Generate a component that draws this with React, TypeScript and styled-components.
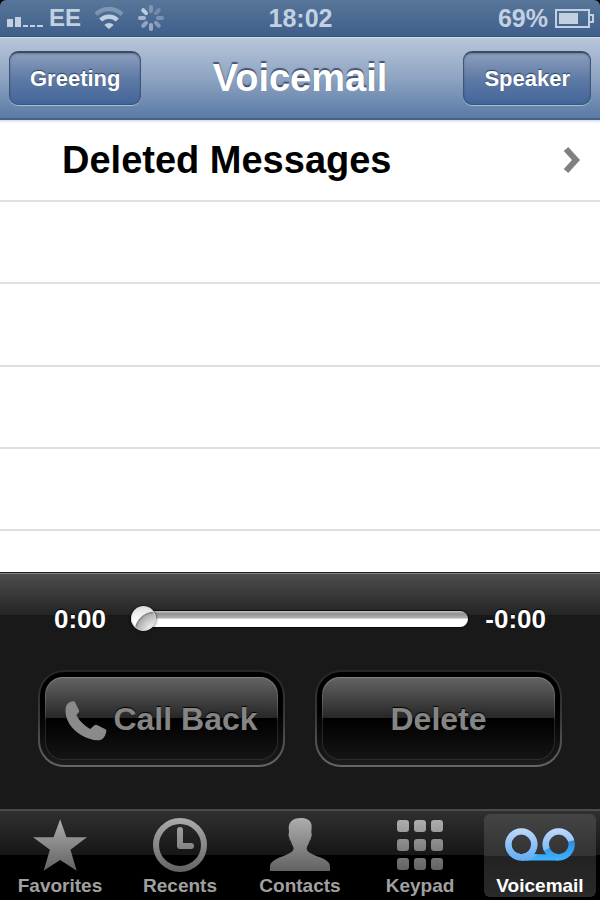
import React from "react";
import styled, { createGlobalStyle, css } from "styled-components";

const GlobalStyle = createGlobalStyle`
  *, *::before, *::after { box-sizing: border-box; }
  body {
    margin: 0;
    background: #000;
    font-family: "Liberation Sans", Arial, sans-serif;
    font-weight: bold;
  }
  button, input { font: inherit; }
`;

const Screen = styled.div`
  display: flex;
  flex-direction: column;
  min-height: 100vh;
`;

const StatusBar = styled.header`
  display: grid;
  grid-template-columns: 1fr auto 1fr;
  align-items: center;
  height: 37px;
  padding: 0 6px 0 7px;
  border-bottom: 1px solid #34527a;
  border-radius: 6px 6px 0 0;
  background: linear-gradient(#587699, #3f5f8b);
  color: #c3d0e2;
  font-size: 25px;
  line-height: 36px;
`;

const StatusGroup = styled.div<{ $end?: boolean }>`
  display: flex;
  align-items: center;
  justify-content: ${(p) => (p.$end ? "flex-end" : "flex-start")};
  gap: ${(p) => (p.$end ? "7px" : "13px")};
`;

const Carrier = styled.span`
  display: flex;
  align-items: center;
  gap: 6px;
  font-size: 24px;
`;

const NavBar = styled.nav`
  display: grid;
  grid-template-columns: 1fr auto 1fr;
  align-items: center;
  height: 83px;
  padding: 0 9px;
  border-top: 1px solid #d3dcea;
  border-bottom: 2px solid #45628a;
  background: linear-gradient(#b9c6da, #8ea4c2 50%, #5a7aa5);
`;

const Title = styled.h1`
  margin: 0;
  color: #fff;
  font-size: 38px;
  line-height: 44px;
  text-shadow: 0 -2px 1px rgba(40, 55, 80, 0.75);
`;

const NavButton = styled.button<{ $end?: boolean }>`
  justify-self: ${(p) => (p.$end ? "end" : "start")};
  height: 54px;
  padding: 0 20px;
  border: 1px solid #3d5578;
  border-top: 2px solid #3c4c66;
  border-radius: 9px;
  background: linear-gradient(#8d9fbd, #5f7ba6 50%, #42659a);
  box-shadow: 0 1px 0 rgba(190, 208, 232, 0.75), inset 0 1px 2px rgba(30, 50, 80, 0.35);
  color: #fff;
  font-size: 22px;
  line-height: 26px;
  text-shadow: 0 -1px 1px rgba(30, 45, 75, 0.8);
`;

const List = styled.main`
  flex: 1;
  display: grid;
  grid-template-rows: repeat(5, 2fr) 1fr;
  background: linear-gradient(#d5dbe8, #fff 3px);
`;

const rowStyle = css`
  border: 0;
  border-bottom: 2px solid #e0e0e0;
`;

const EmptyRow = styled.div`
  ${rowStyle}
  &:last-child { border-bottom: 0; }
`;

const MessageRow = styled.button`
  ${rowStyle}
  display: flex;
  align-items: center;
  justify-content: space-between;
  padding: 0 19px 0 62px;
  background: none;
  color: #000;
  font-size: 38px;
  line-height: 44px;
`;

const Player = styled.section`
  padding: 29px 0 42px;
  border-top: 1px solid #222;
  background:
    linear-gradient(#828282, #828282) top / 100% 1px no-repeat,
    linear-gradient(#4e4e4e, #242424) top / 100% 42px no-repeat,
    #191919;
`;

const Scrubber = styled.div`
  display: flex;
  align-items: center;
  gap: 17px;
  padding: 0 54px;
  color: #fff;
  font-size: 26px;
  line-height: 34px;
  text-shadow: 0 -1px 1px #000;
`;

const Slider = styled.input`
  flex: 1;
  min-width: 0;
  height: 26px;
  margin: 0 0 0 8px;
  appearance: none;
  background: none;

  &::-webkit-slider-runnable-track {
    height: 16px;
    border-radius: 8px;
    background: linear-gradient(#c4c4c4 0, #8f8f8f 18%, #b4b4b4 45%, #fff 50%);
    box-shadow: 0 0 1px 1px #0c0c0c;
  }
  &::-webkit-slider-thumb {
    appearance: none;
    width: 25px;
    height: 25px;
    margin-top: -5px;
    border-radius: 50%;
    background:
      radial-gradient(circle at 24px 26px, #fff 0, #e4e4e4 8px, #b0b0b0 18px, #858585 20px, transparent 21px),
      linear-gradient(#dedede, #fff 60%);
    box-shadow: inset 0 0 1px 1px #d4d4d4, 0 0 3px rgba(0, 0, 0, 0.8);
  }
`;

const Actions = styled.div`
  display: grid;
  grid-template-columns: 1fr 1fr;
  gap: 30px;
  margin-top: 34px;
  padding: 0 38px;
`;

const ActionButton = styled.button`
  padding: 5px;
  border: 2px solid transparent;
  border-radius: 26px;
  background:
    linear-gradient(#000 40%, #1c1c1c) padding-box,
    linear-gradient(#262626, #3a3a3a 50%, #666) border-box;
`;

const ActionFace = styled.span`
  display: flex;
  align-items: center;
  justify-content: center;
  gap: 6px;
  height: 83px;
  border: 1px solid transparent;
  border-radius: 18px;
  background:
    linear-gradient(#636363, #262626 50%, #000 50%, #141414) padding-box,
    linear-gradient(#828282, #484848 45%, #222 55%, #2e2e2e) border-box;
  color: #858585;
  font-size: 32px;
  line-height: 38px;
  text-shadow: 0 -1px 1px #000;
`;

const TabBar = styled.nav`
  display: grid;
  grid-template-columns: repeat(5, 1fr);
  padding: 3px 0;
  border-top: 2px solid #4c4c4c;
  background: linear-gradient(#303030, #161616) top / 100% 44px no-repeat, #000;
`;

const Tab = styled.a<{ $active?: boolean }>`
  display: flex;
  flex-direction: column;
  align-items: center;
  margin: 0 4px;
  border-radius: 6px;
  background: ${(p) =>
    p.$active ? "linear-gradient(#444, #333 50%, #222 50%, #2a2a2a)" : "none"};
  color: ${(p) => (p.$active ? "#fff" : "#a0a0a0")};
  font-size: 19px;
  line-height: 22px;
  text-decoration: none;
  white-space: nowrap;
`;

const TabIcon = styled.span`
  display: flex;
  align-items: center;
  justify-content: center;
  height: 61px;
`;

const Signal = () => (
  <svg width="36" height="18" viewBox="0 0 36 18" fill="currentColor" aria-hidden="true">
    <rect x="0" y="10" width="6" height="8" />
    <rect x="8" y="8" width="6" height="10" />
    <rect x="16" y="16" width="5" height="2" />
    <rect x="23" y="16" width="5" height="2" />
    <rect x="30" y="16" width="6" height="2" />
  </svg>
);

const Wifi = () => (
  <svg width="30" height="22" viewBox="0 0 90 66" fill="none" stroke="currentColor" aria-hidden="true">
    <path d="M6 22A56 56 0 0 1 84 22" strokeWidth="13" opacity="0.4" />
    <path d="M20 39A36 36 0 0 1 70 39" strokeWidth="13" />
    <path d="M45 66L31 54A19 19 0 0 1 59 54Z" fill="currentColor" stroke="none" />
  </svg>
);

const spokes = [0.4, 0.3, 0.4, 0.5, 0.65, 0.6, 0.75, 0.95];

const Spinner = () => (
  <svg width="28" height="28" viewBox="-14 -14 28 28" stroke="currentColor" aria-hidden="true">
    {spokes.map((opacity, i) => (
      <path
        key={i}
        d="M0 -7V-11"
        strokeWidth="4"
        strokeLinecap="round"
        opacity={opacity}
        transform={`rotate(${i * 45})`}
      />
    ))}
  </svg>
);

const Battery = () => (
  <svg width="39" height="19" viewBox="0 0 39 19" fill="none" stroke="currentColor" aria-hidden="true">
    <rect x="1" y="1" width="33" height="17" strokeWidth="2" />
    <rect x="4" y="4" width="19" height="11" fill="currentColor" stroke="none" />
    <path d="M34 6H38V13H34" strokeWidth="2" />
  </svg>
);

const Chevron = () => (
  <svg width="18" height="28" viewBox="0 0 18 28" fill="none" stroke="#808080" strokeWidth="6" aria-hidden="true">
    <path d="M3 3L13 14L3 25" />
  </svg>
);

const Handset = () => (
  <svg width="42" height="44" viewBox="0 -12 126 132" aria-hidden="true">
    <path
      fill="#8a8a8a"
      d="M2 22C4 8 12 3 24 1Q29 0 31 5L42 28Q44 32 40 35L34 42C42 58 58 74 76 84L88 73Q92 70 96 72L120 84Q125 86 124 91C122 104 116 114 106 117C92 120 68 114 48 102C18 84 -2 52 2 22Z"
    />
  </svg>
);

const Silver = ({ id, height }: { id: string; height: number }) => (
  <linearGradient id={id} gradientUnits="userSpaceOnUse" x1="0" y1="0" x2="0" y2={height}>
    <stop offset="0" stopColor="#adadad" />
    <stop offset="1" stopColor="#626262" />
  </linearGradient>
);

const StarIcon = () => (
  <svg width="54" height="52" viewBox="0 0 163 155" aria-hidden="true">
    <defs><Silver id="star" height={155} /></defs>
    <path fill="url(#star)" d="M82 0L101 54H163L113 92L132 155L82 123L32 155L51 92L0 54H62Z" />
  </svg>
);

const ClockIcon = () => (
  <svg width="56" height="56" viewBox="0 0 56 56" fill="none" stroke="url(#clock)" strokeWidth="6" aria-hidden="true">
    <defs><Silver id="clock" height={56} /></defs>
    <circle cx="28" cy="28" r="24" />
    <path d="M28 13V29H39" strokeLinecap="round" strokeLinejoin="round" />
  </svg>
);

const PersonIcon = () => (
  <svg width="60" height="53" viewBox="0 0 180 159" aria-hidden="true">
    <defs><Silver id="person" height={159} /></defs>
    <path
      fill="url(#person)"
      d="M56 28C58 8 72 0 92 0C112 0 124 8 125 24L124 42Q127 48 123 60Q121 68 118 70C116 80 110 84 110 92C112 104 130 110 150 118C170 126 180 134 180 146V159H0V146C0 134 12 126 30 118C50 110 68 104 71 92C71 84 64 80 63 70Q59 68 58 60Q54 48 57 42Z"
    />
  </svg>
);

const KeypadIcon = () => (
  <svg width="46" height="50" viewBox="0 0 46 50" fill="url(#keypad)" aria-hidden="true">
    <defs><Silver id="keypad" height={50} /></defs>
    {[0, 19, 38].map((y) =>
      [0, 17, 34].map((x) => <rect key={`${x}-${y}`} x={x} y={y} width="12" height="12" rx="3" />)
    )}
  </svg>
);

const TapeReels = ({ stroke }: { stroke: string }) => (
  <g fill="none" stroke={stroke} strokeWidth="19">
    <circle cx="49" cy="49" r="39" />
    <circle cx="161" cy="49" r="39" />
    <path d="M49 88H161" />
  </g>
);

const VoicemailIcon = () => (
  <svg width="70" height="34" viewBox="0 0 210 102" aria-hidden="true">
    <defs>
      <linearGradient id="reels" gradientUnits="userSpaceOnUse" x1="0" y1="0" x2="0" y2="98">
        <stop offset="0" stopColor="#2a6fd0" />
        <stop offset="1" stopColor="#3fb4fb" />
      </linearGradient>
      <linearGradient id="gloss" gradientUnits="userSpaceOnUse" x1="0" y1="0" x2="0" y2="98">
        <stop offset="0" stopColor="#c3d9f7" />
        <stop offset="1" stopColor="#5fabf5" />
      </linearGradient>
      <clipPath id="shine">
        <path d="M0 0H210V36Q130 50 66 102H0Z" />
      </clipPath>
    </defs>
    <TapeReels stroke="url(#reels)" />
    <g clipPath="url(#shine)">
      <TapeReels stroke="url(#gloss)" />
    </g>
  </svg>
);

const tabs = [
  { label: "Favorites", Icon: StarIcon },
  { label: "Recents", Icon: ClockIcon },
  { label: "Contacts", Icon: PersonIcon },
  { label: "Keypad", Icon: KeypadIcon },
  { label: "Voicemail", Icon: VoicemailIcon },
];

export default function App() {
  const [active, setActive] = React.useState("Voicemail");
  return (
    <>
      <GlobalStyle />
      <Screen>
        <StatusBar>
          <StatusGroup>
            <Carrier><Signal />EE</Carrier>
            <Wifi />
            <Spinner />
          </StatusGroup>
          <span>18:02</span>
          <StatusGroup $end>
            <span>69%</span>
            <Battery />
          </StatusGroup>
        </StatusBar>
        <NavBar>
          <NavButton type="button">Greeting</NavButton>
          <Title>Voicemail</Title>
          <NavButton type="button" $end>Speaker</NavButton>
        </NavBar>
        <List>
          <MessageRow type="button">
            Deleted Messages
            <Chevron />
          </MessageRow>
          {[1, 2, 3, 4, 5].map((n) => <EmptyRow key={n} />)}
        </List>
        <Player>
          <Scrubber>
            <span>0:00</span>
            <Slider type="range" min="0" max="100" defaultValue="0" aria-label="Playback position" />
            <span>-0:00</span>
          </Scrubber>
          <Actions>
            <ActionButton type="button">
              <ActionFace><Handset />Call Back</ActionFace>
            </ActionButton>
            <ActionButton type="button">
              <ActionFace>Delete</ActionFace>
            </ActionButton>
          </Actions>
        </Player>
        <TabBar>
          {tabs.map(({ label, Icon }) => (
            <Tab
              key={label}
              href={`#${label.toLowerCase()}`}
              $active={label === active}
              onClick={() => setActive(label)}
            >
              <TabIcon><Icon /></TabIcon>
              {label}
            </Tab>
          ))}
        </TabBar>
      </Screen>
    </>
  );
}
